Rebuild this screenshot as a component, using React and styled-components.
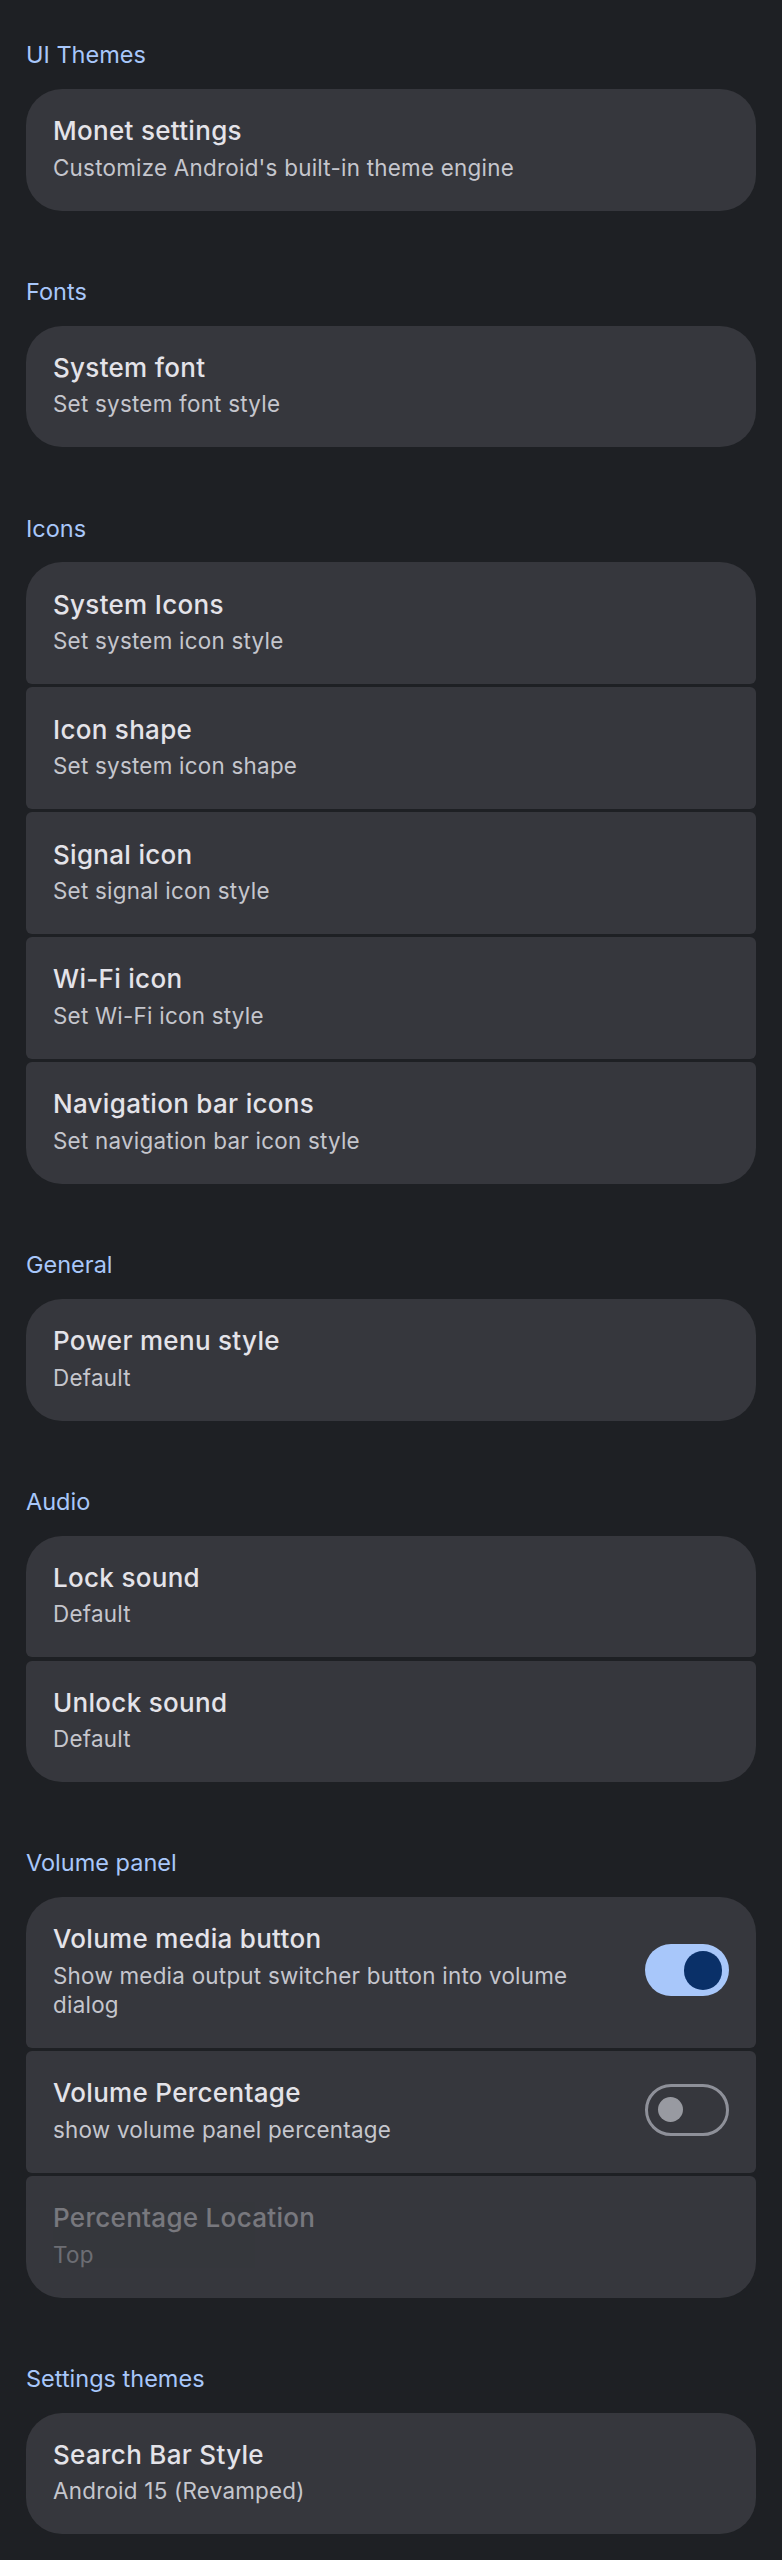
import styled, { createGlobalStyle } from "styled-components";

const GlobalStyle = createGlobalStyle`
  html, body {
    margin: 0;
    padding: 0;
    background: #1e2024;
  }
  body {
    font-family: Inter, "Noto Sans", sans-serif;
    -webkit-font-smoothing: antialiased;
  }
`;

const sections = [
  {
    title: "UI Themes",
    items: [
      { title: "Monet settings", summary: "Customize Android's built-in theme engine" },
    ],
  },
  {
    title: "Fonts",
    items: [{ title: "System font", summary: "Set system font style" }],
  },
  {
    title: "Icons",
    items: [
      { title: "System Icons", summary: "Set system icon style" },
      { title: "Icon shape", summary: "Set system icon shape" },
      { title: "Signal icon", summary: "Set signal icon style" },
      { title: "Wi-Fi icon", summary: "Set Wi-Fi icon style" },
      { title: "Navigation bar icons", summary: "Set navigation bar icon style" },
    ],
  },
  {
    title: "General",
    items: [{ title: "Power menu style", summary: "Default" }],
  },
  {
    title: "Audio",
    items: [
      { title: "Lock sound", summary: "Default" },
      { title: "Unlock sound", summary: "Default" },
    ],
  },
  {
    title: "Volume panel",
    items: [
      {
        title: "Volume media button",
        summary: "Show media output switcher button into volume dialog",
        toggle: true,
      },
      { title: "Volume Percentage", summary: "show volume panel percentage", toggle: false },
      { title: "Percentage Location", summary: "Top", disabled: true },
    ],
  },
  {
    title: "Settings themes",
    items: [{ title: "Search Bar Style", summary: "Android 15 (Revamped)" }],
  },
];

function App() {
  return (
    <>
      <GlobalStyle />
      <Page>
        {sections.map((section) => (
          <Section key={section.title}>
            <CategoryLabel>{section.title}</CategoryLabel>
            <Group>
              {section.items.map((item) => (
                <PrefItem key={item.title}>
                  <TextCol $disabled={item.disabled}>
                    <PrefTitle>{item.title}</PrefTitle>
                    <PrefSummary>{item.summary}</PrefSummary>
                  </TextCol>
                  {item.toggle !== undefined && (
                    <Switch $on={item.toggle}>
                      <Thumb $on={item.toggle} />
                    </Switch>
                  )}
                </PrefItem>
              ))}
            </Group>
          </Section>
        ))}
      </Page>
    </>
  );
}

const Page = styled.div`
  min-height: 2560px;
  box-sizing: border-box;
  padding: 41.4px 26px 0;
  background: #1e2024;
`;

const Section = styled.section`
  & + & {
    margin-top: 67.1px;
  }
`;

const CategoryLabel = styled.div`
  font-size: 23.5px;
  line-height: 28px;
  font-weight: 400;
  color: #a8c7fa;
  margin-bottom: 19.9px;
`;

const Group = styled.div`
  display: flex;
  flex-direction: column;
  gap: 3.4px;
  border-radius: 36px;
  overflow: hidden;
`;

const PrefItem = styled.div`
  display: flex;
  align-items: center;
  gap: 40px;
  padding: 25.1px 27px 29px;
  background: #36373d;
  border-radius: 6px;
`;

const TextCol = styled.div`
  flex: 1;
  min-width: 0;
  opacity: ${(p) => (p.$disabled ? 0.38 : 1)};
`;

const PrefTitle = styled.div`
  font-size: 26px;
  line-height: 34px;
  font-weight: 500;
  letter-spacing: 0.3px;
  color: #e4e3e9;
`;

const PrefSummary = styled.div`
  margin-top: 4.5px;
  font-size: 22.4px;
  line-height: 29px;
  letter-spacing: 0.25px;
  color: #c5c6cd;
`;

const Switch = styled.div`
  flex-shrink: 0;
  box-sizing: border-box;
  width: 84px;
  height: 52px;
  border-radius: 26px;
  display: flex;
  align-items: center;
  justify-content: ${(p) => (p.$on ? "flex-end" : "flex-start")};
  padding: ${(p) => (p.$on ? "0 6.8px" : "0 10px")};
  background: ${(p) => (p.$on ? "#a8c7fa" : "transparent")};
  border: ${(p) => (p.$on ? "none" : "3px solid #8e9099")};
`;

const Thumb = styled.div`
  width: ${(p) => (p.$on ? "38.4px" : "25px")};
  height: ${(p) => (p.$on ? "38.4px" : "25px")};
  border-radius: 50%;
  background: ${(p) => (p.$on ? "#0a3068" : "#989aa1")};
`;

export default App;
